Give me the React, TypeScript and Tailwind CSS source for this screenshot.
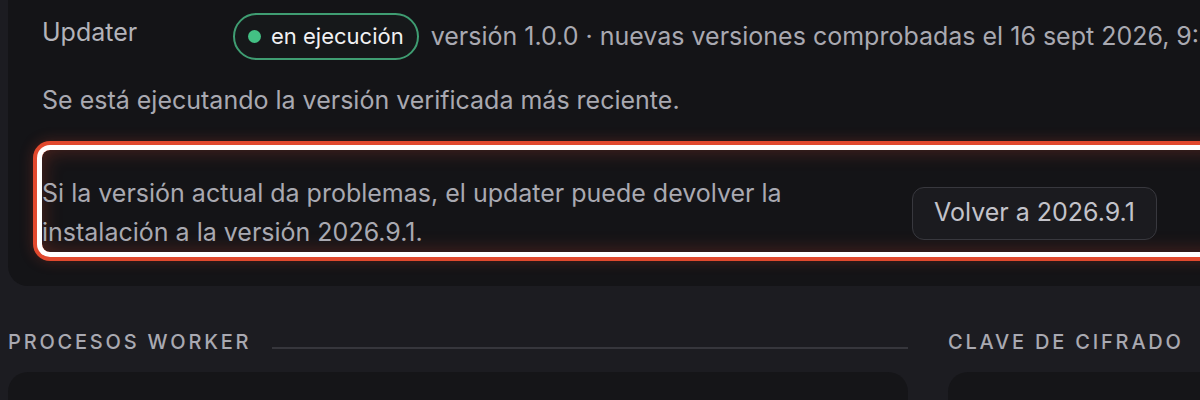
import React from "react";

const StatusBadge = ({ label }: { label: string }) => (
  <span className="inline-flex h-[47px] shrink-0 items-center gap-[10px] rounded-full border-2 border-[#3f9d72] bg-[#16181a] px-[13px] text-[22px] text-[#f1f1f3]">
    <span className="h-[13px] w-[13px] rounded-full bg-[#43c084]" />
    {label}
  </span>
);

const SectionHeader = ({ title, line }: { title: string; line?: boolean }) => (
  <div className="flex h-[30px] items-center gap-[21px]">
    <h3 className="whitespace-nowrap text-[20px] font-medium uppercase tracking-[0.14em] text-[#a9a9b1]">
      {title}
    </h3>
    {line && <div className="mt-[11px] h-[2px] flex-1 bg-[#36363c]" />}
  </div>
);

export default function App() {
  return (
    <div
      className="h-[400px] w-full overflow-hidden bg-[#1c1c21]"
      style={{ fontFamily: "Inter, 'Noto Sans', sans-serif" }}
    >
      <div className="w-[1500px] pl-2">
        {/* Updater card */}
        <div className="-mt-6 rounded-[20px] bg-[#141417] pb-[34px] pl-[34px] pr-8 pt-[37px]">
          <div className="flex items-center">
            <span className="-mt-2 w-[191px] shrink-0 text-[25px] text-[#b3b3ba]">Updater</span>
            <StatusBadge label="en ejecución" />
            <span className="ml-[12px] whitespace-nowrap text-[25px] text-[#a9a9b1]">
              versión 1.0.0 · nuevas versiones comprobadas el 16 sept 2026, 9:41
            </span>
          </div>

          <p className="mt-[21px] text-[25px] leading-[39px] text-[#a9a9b1]">
            Se está ejecutando la versión verificada más reciente.
          </p>

          <div className="mt-[30px] flex items-center rounded-[8px] pt-[24px] shadow-[0_0_0_5px_#ffffff,0_0_0_9px_#e1492e,0_0_14px_9px_rgba(225,73,46,0.25),inset_0_0_20px_rgba(225,73,46,0.3)]">
            <p className="w-[826px] shrink-0 text-[25px] leading-[39px] text-[#a9a9b1]">
              Si la versión actual da problemas, el updater puede devolver la instalación a la versión 2026.9.1.
            </p>
            <button className="ml-[44px] h-[53px] shrink-0 rounded-[12px] border border-[#38383e] bg-[#1b1b1f] px-[21px] text-[25px] text-[#c3c3ca]">
              Volver a 2026.9.1
            </button>
          </div>
        </div>

        {/* Lower sections */}
        <div className="mt-[41px] grid grid-cols-[900px_1fr] gap-x-10">
          <SectionHeader title="Procesos worker" line />
          <SectionHeader title="Clave de cifrado" />
          <div className="mt-[15px] h-[120px] rounded-[20px] bg-[#151518]" />
          <div className="mt-[15px] h-[120px] rounded-[20px] bg-[#151518]" />
        </div>
      </div>
    </div>
  );
}
